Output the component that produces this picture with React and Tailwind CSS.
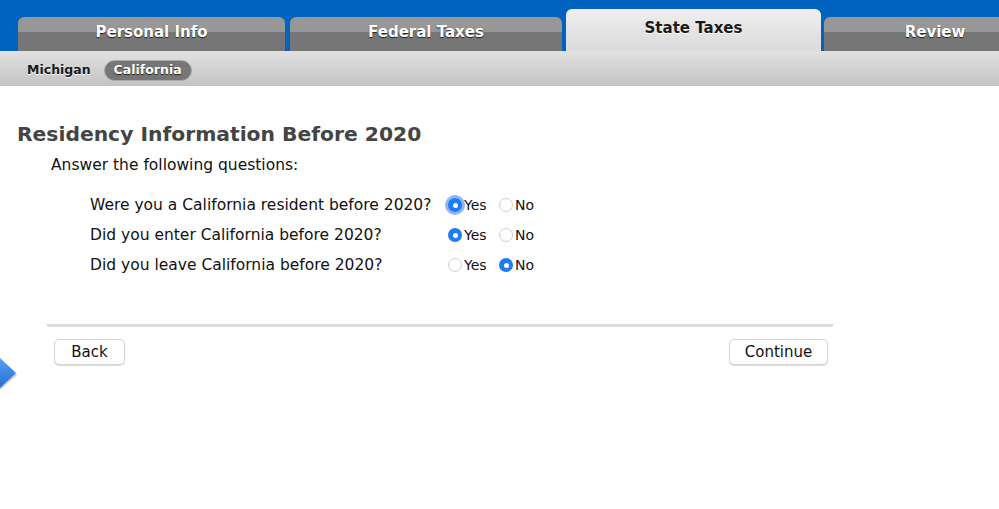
import { useState } from 'react';

const font = { fontFamily: '"DejaVu Sans", "Liberation Sans", sans-serif' };

function Tab({ label, active, className }) {
  if (active) {
    return (
      <div className={`shrink-0 h-[42px] rounded-t-[6px] bg-gradient-to-b from-[#f0f0f0] via-[#e4e4e4] to-[#dcdcdc] flex items-center justify-center ${className}`}>
        <span className="text-[15px] font-bold text-[#1a1a1a] [text-shadow:0_1px_0_#fff] -mt-[4px]">{label}</span>
      </div>
    );
  }
  return (
    <div className={`shrink-0 h-[34px] rounded-t-[6px] overflow-hidden flex flex-col relative ${className}`}>
      <div className="h-[15px] bg-[#979797]" />
      <div className="flex-1 bg-[#767676]" />
      <span className="absolute inset-0 pb-[4px] flex items-center justify-center text-[15px] font-bold text-white [text-shadow:0_1px_1px_#222]">{label}</span>
    </div>
  );
}

function Radio({ checked, focus }) {
  return (
    <span className={`relative inline-flex items-center justify-center w-[14px] h-[14px] rounded-full ${checked ? 'bg-[#1f7cf6]' : 'bg-white border border-[#cfcfcf]'} ${focus ? 'ring-[3px] ring-[#8fb6f5]' : ''}`}>
      {checked && <span className="w-[5px] h-[5px] rounded-full bg-white" />}
    </span>
  );
}

function Question({ text, value, focus }) {
  return (
    <>
      <div className="text-[15.5px] text-[#111] leading-[30px]">{text}</div>
      <div className="flex items-center text-[14px] text-[#111]">
        <Radio checked={value === 'yes'} focus={focus} />
        <span className="ml-[2px] w-[35px]">Yes</span>
        <Radio checked={value === 'no'} />
        <span className="ml-[2px]">No</span>
      </div>
    </>
  );
}

export default function App() {
  const [answers] = useState(['yes', 'yes', 'no']);
  return (
    <div className="w-[999px] h-[509px] bg-white overflow-hidden relative" style={font}>
      {/* tab bar */}
      <div className="h-[51px] bg-[#0063bf] flex items-end">
        <Tab label="Personal Info" className="ml-[18px] w-[267px]" />
        <Tab label="Federal Taxes" className="ml-[5px] w-[272px]" />
        <Tab label="State Taxes" active className="ml-[4px] w-[255px]" />
        <Tab label="Review" className="ml-[3px] w-[222px]" />
      </div>
      {/* sub tabs */}
      <div className="h-[35px] pt-[3px] bg-gradient-to-b from-[#e2e2e2] to-[#c3c3c3] flex items-center pl-[27px] gap-[13px] text-[12.5px] font-bold">
        <span className="text-[#1a1a1a] [text-shadow:0_1px_0_#fff]">Michigan</span>
        <span className="h-[21px] px-[9px] rounded-full bg-[#767676] border border-[#aaa] text-white flex items-center [text-shadow:0_1px_1px_#222]">California</span>
      </div>

      <div className="pl-[17px] pt-[34px]">
        <h1 className="text-[20.3px] font-bold text-[#444] leading-[28px]">Residency Information Before 2020</h1>
        <p className="ml-[34px] mt-[6px] text-[15.5px] text-[#111]">Answer the following questions:</p>
        <div className="ml-[73px] mt-[13px] grid grid-cols-[358px_auto]">
          <Question text="Were you a California resident before 2020?" value={answers[0]} focus />
          <Question text="Did you enter California before 2020?" value={answers[1]} />
          <Question text="Did you leave California before 2020?" value={answers[2]} />
        </div>
        <div className="ml-[30px] mt-[44px] w-[786px] h-[3px] bg-[#dddddd]" />
        <div className="ml-[37px] mr-[171px] mt-[12px] flex justify-between">
          <button className="w-[71px] h-[26px] rounded-[5px] bg-white border border-[#d4d4d4] shadow-[0_1px_1px_rgba(0,0,0,0.15)] text-[15px] text-[#111]">Back</button>
          <button className="w-[99px] h-[26px] rounded-[5px] bg-white border border-[#d4d4d4] shadow-[0_1px_1px_rgba(0,0,0,0.15)] text-[15px] text-[#111]">Continue</button>
        </div>
      </div>

      {/* side arrow */}
      <svg className="absolute left-0 top-[356px]" width="22" height="36" viewBox="0 0 22 36">
        <defs>
          <linearGradient id="ag" x1="0" y1="0" x2="0" y2="1">
            <stop offset="0" stopColor="#5aa0f0" />
            <stop offset="1" stopColor="#1f6fd8" />
          </linearGradient>
        </defs>
        <path d="M0 4 L17 19 L0 34 Z" fill="#999" opacity="0.5" />
        <path d="M0 2 L16 17 L0 32 Z" fill="url(#ag)" />
      </svg>
    </div>
  );
}
